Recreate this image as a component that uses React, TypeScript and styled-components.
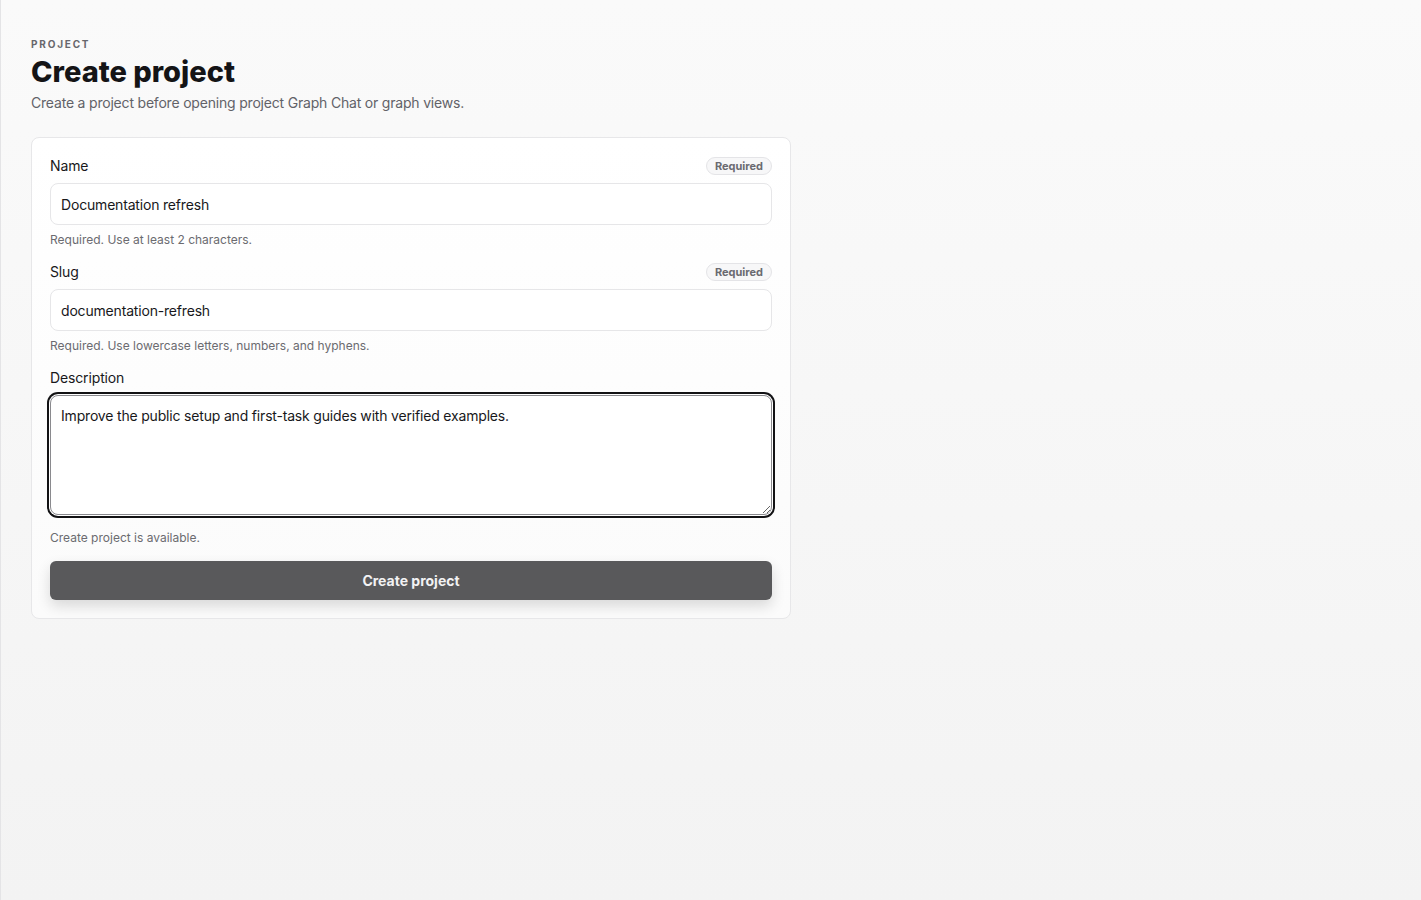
import React, { useEffect, useRef } from 'react';
import styled, { createGlobalStyle } from 'styled-components';

const GlobalStyle = createGlobalStyle`
  html, body {
    margin: 0;
    padding: 0;
    height: 100%;
  }

  body {
    font-family: Inter, "Noto Sans", "Liberation Sans", sans-serif;
    color: #18181b;
    -webkit-font-smoothing: antialiased;
  }

  * {
    box-sizing: border-box;
  }
`;

const Page = styled.main`
  min-height: 100vh;
  padding: 37px 30px;
  border-left: 1px solid #e4e4e6;
  background: linear-gradient(180deg, #fafafa 0%, #f3f3f3 100%);
`;

const Header = styled.header`
  display: flex;
  flex-direction: column;
  gap: 4px;
  margin-bottom: 24px;
`;

const Eyebrow = styled.div`
  font-size: 10px;
  line-height: 14px;
  font-weight: 700;
  letter-spacing: 0.18em;
  text-transform: uppercase;
  color: #67676c;
`;

const Title = styled.h1`
  margin: 0;
  font-size: 29px;
  line-height: 34px;
  font-weight: 800;
  color: #141416;
`;

const Subtitle = styled.p`
  margin: 0;
  font-size: 14px;
  line-height: 20px;
  letter-spacing: -0.014em;
  color: #626268;
`;

const Card = styled.form`
  width: 760px;
  display: flex;
  flex-direction: column;
  gap: 15px;
  padding: 19px 18px 18px;
  background: linear-gradient(180deg, #ffffff 0%, #fbfbfb 100%);
  border: 1px solid #e7e7e9;
  border-radius: 8px;
`;

const Field = styled.div`
  display: flex;
  flex-direction: column;
`;

const LabelRow = styled.div`
  display: flex;
  align-items: center;
  justify-content: space-between;
  height: 18px;
  margin-bottom: 8px;
`;

const Label = styled.label`
  font-size: 14px;
  line-height: 18px;
  font-weight: 400;
  letter-spacing: -0.01em;
  color: #18181b;
`;

const Badge = styled.span`
  display: inline-flex;
  align-items: center;
  height: 18px;
  padding: 0 8px;
  font-size: 11px;
  font-weight: 700;
  color: #6a6a70;
  background: #f7f7f8;
  border: 1px solid #e4e4e7;
  border-radius: 999px;
`;

const Input = styled.input`
  height: 42px;
  padding: 0 10px;
  font: inherit;
  font-size: 14px;
  letter-spacing: -0.013em;
  color: #18181b;
  background: #ffffff;
  border: 1px solid #e6e6e8;
  border-radius: 8px;
  outline: none;
`;

const TextArea = styled.textarea<{ $focused?: boolean }>`
  height: 120px;
  padding: 10px;
  font: inherit;
  font-size: 14px;
  line-height: 20px;
  letter-spacing: -0.013em;
  color: #18181b;
  background: #ffffff;
  border: 1px solid ${props => props.$focused ? '#8a8a8e' : '#e6e6e8'};
  border-radius: 8px;
  outline: none;
  resize: vertical;
  box-shadow: ${props => props.$focused ? '0 0 0 1px #ffffff, 0 0 0 3px #121214' : 'none'};

  &:focus {
    outline: none;
  }
`;

const Hint = styled.div<{ $gap?: number }>`
  margin-top: ${props => props.$gap || 0}px;
  font-size: 12px;
  line-height: 16px;
  color: #6b6b70;
`;

const SubmitButton = styled.button`
  height: 39px;
  border: none;
  border-radius: 6px;
  background: #59595b;
  color: #f2f2f3;
  font: inherit;
  font-size: 14px;
  font-weight: 700;
  cursor: pointer;
  box-shadow: 0 6px 14px rgba(0, 0, 0, 0.14);
`;

const description = 'Improve the public setup and first-task guides with verified examples.';

const App = () => {
    const areaRef = useRef<HTMLTextAreaElement>(null);

    useEffect(() => {
        const el = areaRef.current;
        if (el) {
            el.focus();
            el.setSelectionRange(description.length, description.length);
        }
    }, []);

    return (
        <>
            <GlobalStyle />
            <Page>
                <Header>
                    <Eyebrow>Project</Eyebrow>
                    <Title>Create project</Title>
                    <Subtitle>Create a project before opening project Graph Chat or graph views.</Subtitle>
                </Header>

                <Card onSubmit={e => e.preventDefault()}>
                    <Field>
                        <LabelRow>
                            <Label htmlFor="name">Name</Label>
                            <Badge>Required</Badge>
                        </LabelRow>
                        <Input id="name" defaultValue="Documentation refresh" />
                        <Hint $gap={7}>Required. Use at least 2 characters.</Hint>
                    </Field>

                    <Field>
                        <LabelRow>
                            <Label htmlFor="slug">Slug</Label>
                            <Badge>Required</Badge>
                        </LabelRow>
                        <Input id="slug" defaultValue="documentation-refresh" />
                        <Hint $gap={7}>Required. Use lowercase letters, numbers, and hyphens.</Hint>
                    </Field>

                    <Field>
                        <LabelRow>
                            <Label htmlFor="description">Description</Label>
                        </LabelRow>
                        <TextArea id="description" ref={areaRef} $focused defaultValue={description} />
                    </Field>

                    <Hint>Create project is available.</Hint>

                    <SubmitButton type="submit">Create project</SubmitButton>
                </Card>
            </Page>
        </>
    );
};

export default App;
